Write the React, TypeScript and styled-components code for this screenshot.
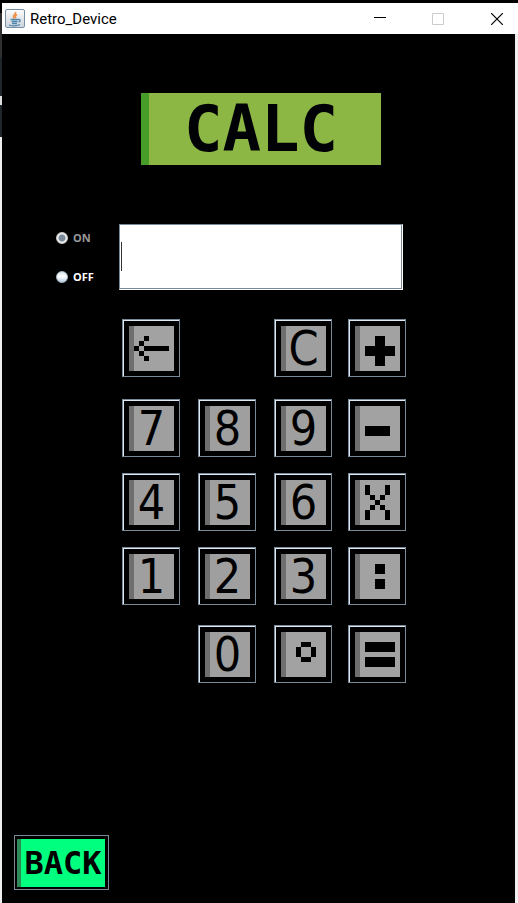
import React, { useState } from "react";
import styled, { createGlobalStyle } from "styled-components";

const GlobalStyle = createGlobalStyle`
  * { box-sizing: border-box; }
  body { margin: 0; background: #000; }
`;

const Desktop = styled.div`
  min-height: 100vh;
  padding: 3px 0 0 2px;
  display: flex;
  background: linear-gradient(
    #000 13px, #303030 13px, #303030 58px, #20272b 58px, #20272b 96px,
    #ddd 96px, #ddd 105px, #20272b 105px, #20272b 137px, #eee 137px
  );
`;

const Window = styled.main`
  flex: 1;
  display: flex;
  flex-direction: column;
  background: #000;
`;

const TitleBar = styled.header`
  display: flex;
  align-items: center;
  height: 31px;
  padding-left: 3px;
  background: #fff;
`;

const Title = styled.h1`
  flex: 1;
  margin: 0 0 0 5px;
  font: 400 15px/20px Roboto, "Open Sans", sans-serif;
  color: #000;
`;

const WindowButton = styled.button`
  display: grid;
  place-items: center;
  width: 58px;
  height: 31px;
  padding: 0;
  border: 0;
  background: none;
  color: #000;
  &:disabled { color: #ccc; }
  &:last-child { width: 51px; padding-left: 9px; }
  & svg { display: block; }
`;

const Panel = styled.section`
  flex: 1;
  display: flex;
  flex-direction: column;
  align-items: flex-start;
  padding: 59px 12px 13px;
  border-right: 3px solid #f0f0f0;
`;

const Banner = styled.h2`
  align-self: center;
  display: grid;
  place-items: center;
  width: 240px;
  height: 72px;
  margin: 0 0 0 5px;
  padding-right: 8px;
  border-left: 8px solid #469e29;
  background: #8db745;
  color: #000205;
  font: 700 64px/72px "DejaVu Sans Mono", monospace;
`;

const Console = styled.div`
  align-self: center;
  display: grid;
  grid-template-columns: 63px 284px;
  margin: 59px 58px 0 0;
`;

const PowerGroup = styled.fieldset`
  display: flex;
  flex-direction: column;
  gap: 23px;
  margin: 0;
  padding: 6px 0 0;
  border: 0;
`;

const PowerLabel = styled.label<{ $dim?: boolean }>`
  display: flex;
  align-items: center;
  gap: 5px;
  font: 700 11px/16px "Noto Sans", sans-serif;
  color: ${(p) => (p.$dim ? "#999" : "#fff")};
`;

const Radio = styled.input`
  appearance: none;
  width: 12px;
  height: 12px;
  margin: 0;
  border: 1px solid #aab8c4;
  border-radius: 50%;
  background: linear-gradient(#dce7ef, #fff 45%, #b8cfe5);
  &:checked {
    border-color: #ccc;
    background: radial-gradient(circle, #7a8a99 3px, #eee 4px);
  }
`;

const Display = styled.div`
  position: relative;
  height: 66px;
  border: 1px solid #7a8a99;
  border-right-color: #fff;
  border-bottom-color: #fff;
  &::after {
    content: "";
    position: absolute;
    left: 1px;
    top: 17px;
    width: 1px;
    height: 29px;
    background: #333;
  }
`;

const DisplayInput = styled.input`
  display: block;
  width: 100%;
  height: 100%;
  padding: 0 4px;
  border: 0;
  border-right: 1px solid #7a8a99;
  border-bottom: 1px solid #7a8a99;
  border-radius: 0;
  outline: 0;
  background: #fff;
  font: 24px "DejaVu Sans", sans-serif;
`;

const Keypad = styled.div`
  grid-column: 2;
  display: grid;
  grid-template-columns: 76px 76px 74px 58px;
  grid-template-rows: 80px 74px 74px 78px 58px;
  margin: 29px 0 0 3px;
`;

const KeyButton = styled.button<{ $column: number }>`
  grid-column: ${(p) => p.$column};
  width: 58px;
  height: 58px;
  padding: 6px 5px 5px 6px;
  border: 1px solid #7a8a99;
  box-shadow: inset 1px 1px #dce9f5;
  background: #000;
`;

const KeyFace = styled.span`
  display: grid;
  place-items: center;
  width: 45px;
  height: 45px;
  padding-right: 5px;
  border-left: 5px solid #6e6e6e;
  background: #9f9f9f;
  color: #000;
  font: 48px/45px "DejaVu Sans Condensed", "DejaVu Sans", sans-serif;
`;

const KeyIcon = styled.svg`
  display: block;
  width: 45px;
  height: 45px;
  background: #a2a2a2;
`;

const BackButton = styled.button`
  width: 95px;
  height: 55px;
  margin-top: auto;
  padding: 2px;
  border: 1px solid #7a8a99;
  background: #000;
`;

const BackFace = styled.span`
  display: block;
  width: 88px;
  height: 48px;
  border-left: 4px solid #2e8b57;
  background: #00ff7f;
  color: #000;
  text-align: center;
  font: 700 32px/48px "DejaVu Sans Mono", monospace;
`;

// Each block is x, y, width, height on the nine-cell key face.
type Block = [number, number, number, number];

const symbols: Record<string, Block[]> = {
  Backspace: [[3, 2, 1, 1], [2, 3, 1, 1], [1, 4, 1, 1], [3, 4, 5, 1], [2, 5, 1, 1], [3, 6, 1, 1]],
  Plus: [[4, 2, 2, 6], [2, 4, 6, 2]],
  Minus: [[2, 4, 5, 2]],
  Multiply: [[2, 1, 1, 2], [6, 1, 1, 2], [3, 3, 1, 1], [5, 3, 1, 1], [4, 4, 1, 1], [3, 5, 1, 1], [5, 5, 1, 1], [2, 6, 1, 2], [6, 6, 1, 2]],
  Divide: [[4, 2, 2, 2], [4, 5, 2, 2]],
  Point: [[4, 2, 2, 1], [3, 3, 1, 2], [6, 3, 1, 2], [4, 5, 2, 1]],
  Equals: [[2, 2, 6, 2], [2, 5, 6, 2]],
};

const keys: [string, number][] = [
  ["Backspace", 1], ["C", 3], ["Plus", 4],
  ["7", 1], ["8", 2], ["9", 3], ["Minus", 4],
  ["4", 1], ["5", 2], ["6", 3], ["Multiply", 4],
  ["1", 1], ["2", 2], ["3", 3], ["Divide", 4],
  ["0", 2], ["Point", 3], ["Equals", 4],
];

function Key({ name, column, onPress }: { name: string; column: number; onPress: (name: string) => void }) {
  const blocks = symbols[name];
  return (
    <KeyButton type="button" $column={column} aria-label={name} onClick={() => onPress(name)}>
      {blocks ? (
        <KeyIcon viewBox="0 0 9 9" shapeRendering="crispEdges" aria-hidden="true">
          <rect width="1" height="9" fill="#6e6e6e" />
          {blocks.map(([x, y, width, height]) => (
            <rect key={`${x}-${y}`} x={x} y={y} width={width} height={height} />
          ))}
        </KeyIcon>
      ) : (
        <KeyFace>{name}</KeyFace>
      )}
    </KeyButton>
  );
}

function JavaIcon() {
  return (
    <svg width="20" height="20" viewBox="0 0 20 20" fill="none" aria-hidden="true">
      <defs>
        <linearGradient id="tile" x2="0" y2="1">
          <stop stopColor="#fdfdfd" />
          <stop offset="1" stopColor="#ccd3da" />
        </linearGradient>
      </defs>
      <rect x=".5" y=".5" width="19" height="18" rx="1.5" fill="url(#tile)" stroke="#7890a5" />
      <path d="M10.500 3c1 2-3 3-2 5l1 1.500M12 5.500c-2 1-2 2-1 3.500" stroke="#ef8a3c" strokeWidth="1.500" />
      <path d="M5.500 10.500h7.500M6.500 12.500h6M7 14.500h5M4 16c3 1 8 1 11-.5M13 10.500c3-.5 2.500 2 .5 2.500" stroke="#4f86ab" strokeWidth="1.300" />
    </svg>
  );
}

export default function App() {
  const [entry, setEntry] = useState("");
  const [on, setOn] = useState(true);

  const press = (name: string) => {
    if (!on) return;
    if (name === "C") setEntry("");
    else if (name === "Backspace") setEntry((value) => value.slice(0, -1));
    else if (/^\d$/.test(name)) setEntry((value) => value + name);
  };

  return (
    <>
      <GlobalStyle />
      <Desktop>
        <Window>
          <TitleBar>
            <JavaIcon />
            <Title>Retro_Device</Title>
            <WindowButton type="button" aria-label="Minimize">
              <svg width="12" height="12" aria-hidden="true"><path d="M0 4.500h12" stroke="currentColor" /></svg>
            </WindowButton>
            <WindowButton type="button" aria-label="Maximize" disabled>
              <svg width="12" height="12" aria-hidden="true"><path d="M.5.5h11v11H.5z" fill="none" stroke="currentColor" /></svg>
            </WindowButton>
            <WindowButton type="button" aria-label="Close">
              <svg width="12" height="12" aria-hidden="true"><path d="M0 0l12 12M12 0L0 12" stroke="currentColor" strokeWidth="1.200" /></svg>
            </WindowButton>
          </TitleBar>
          <Panel>
            <Banner>CALC</Banner>
            <Console>
              <PowerGroup aria-label="Power">
                <PowerLabel $dim={on}>
                  <Radio type="radio" name="power" checked={on} onChange={() => setOn(true)} />
                  ON
                </PowerLabel>
                <PowerLabel $dim={!on}>
                  <Radio type="radio" name="power" checked={!on} onChange={() => setOn(false)} />
                  OFF
                </PowerLabel>
              </PowerGroup>
              <Display>
                <DisplayInput aria-label="Display" value={entry} onChange={(e) => setEntry(e.target.value)} />
              </Display>
              <Keypad>
                {keys.map(([name, column]) => (
                  <Key key={name} name={name} column={column} onPress={press} />
                ))}
              </Keypad>
            </Console>
            <BackButton type="button"><BackFace>BACK</BackFace></BackButton>
          </Panel>
        </Window>
      </Desktop>
    </>
  );
}
